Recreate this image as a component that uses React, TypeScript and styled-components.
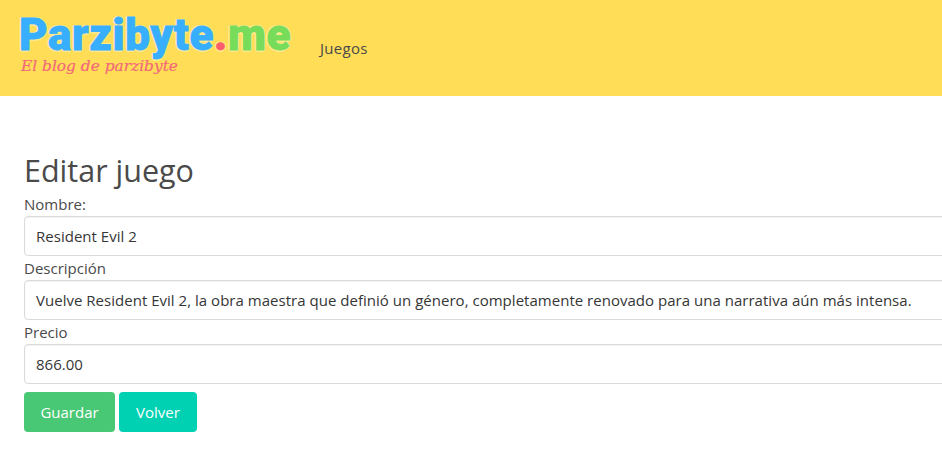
import React from "react";
import styled, { createGlobalStyle } from "styled-components";

const Global = createGlobalStyle`
  html, body { margin: 0; padding: 0; background: #fff; overflow: hidden; }
  body { font-family: "Open Sans", "Noto Sans", sans-serif; color: #4a4a4a; }
`;

const Navbar = styled.nav`
  height: 96px;
  background: #ffdd57;
  display: flex;
  align-items: center;
`;

const Logo = styled.a`
  display: flex;
  flex-direction: column;
  margin-left: 19px;
  width: 300px;
  height: 96px;
  padding-top: 12px;
  box-sizing: border-box;
`;

const LogoTitle = styled.div`
  font-family: "Roboto", "Liberation Sans", sans-serif;
  font-weight: 900;
  font-size: 44px;
  line-height: 46px;
  letter-spacing: 0.6px;
  white-space: nowrap;
  text-shadow: 1.5px 0 0 #ffe98f, -1.5px 0 0 #ffe98f, 0 1.5px 0 #ffe98f, 0 -1.5px 0 #ffe98f,
    1.2px 1.2px 0 #ffe98f, -1.2px 1.2px 0 #ffe98f, 1.2px -1.2px 0 #ffe98f, -1.2px -1.2px 0 #ffe98f;
`;

const LogoPart = styled.span<{ $color: string }>`
  color: ${(p) => p.$color};
  -webkit-text-stroke: 0.8px ${(p) => p.$color};
`;

const Tagline = styled.div`
  font-family: "DejaVu Serif", serif;
  font-style: italic;
  font-size: 15.4px;
  line-height: 16px;
  margin-left: 2px;
  color: #f4697a;
  -webkit-text-stroke: 0.2px #f4697a;
`;

const NavItem = styled.a`
  font-size: 15px;
  letter-spacing: 0.3px;
  color: #4a4a4a;
  line-height: 24px;
  margin-left: 1px;
`;

const Section = styled.section`
  padding: 53px 24px 0;
  width: 1100px;
  box-sizing: border-box;
`;

const Title = styled.h1`
  margin: 0;
  font-size: 30.5px;
  font-weight: 400;
  line-height: 43px;
  color: #4a4a4a;
`;

const Label = styled.label`
  display: block;
  font-size: 15px;
  line-height: 24px;
  height: 24px;
`;

const Input = styled.input`
  display: block;
  width: 100%;
  height: 40px;
  box-sizing: border-box;
  border: 1px solid #dbdbdb;
  border-radius: 4px;
  padding: 0 11px;
  font: 400 15px "Open Sans", sans-serif;
  letter-spacing: 0.023px;
  color: #363636;
  box-shadow: inset 0 1px 2px rgba(10, 10, 10, 0.06);
  outline: none;
`;

const Actions = styled.div`
  display: flex;
  gap: 4px;
  margin-top: 8px;
`;

const Button = styled.button<{ $bg: string; $w: number }>`
  width: ${(p) => p.$w}px;
  height: 40px;
  border: none;
  border-radius: 4px;
  background: ${(p) => p.$bg};
  color: #fff;
  font: 400 15px "Open Sans", sans-serif;
  padding: 0;
`;

export default function App() {
  return (
    <>
      <Global />
      <Navbar>
        <Logo>
          <LogoTitle>
            <LogoPart $color="#38aeff">Parzibyte</LogoPart>
            <LogoPart $color="#ff5c6c">.</LogoPart>
            <LogoPart $color="#76dc5a">me</LogoPart>
          </LogoTitle>
          <Tagline>El blog de parzibyte</Tagline>
        </Logo>
        <NavItem>Juegos</NavItem>
      </Navbar>
      <Section>
        <Title>Editar juego</Title>
        <Label>Nombre:</Label>
        <Input readOnly value="Resident Evil 2" />
        <Label>Descripción</Label>
        <Input readOnly value="Vuelve Resident Evil 2, la obra maestra que definió un género, completamente renovado para una narrativa aún más intensa." />
        <Label>Precio</Label>
        <Input readOnly value="866.00" />
        <Actions>
          <Button $bg="#48c774" $w={91}>Guardar</Button>
          <Button $bg="#00d1b2" $w={78}>Volver</Button>
        </Actions>
      </Section>
    </>
  );
}
